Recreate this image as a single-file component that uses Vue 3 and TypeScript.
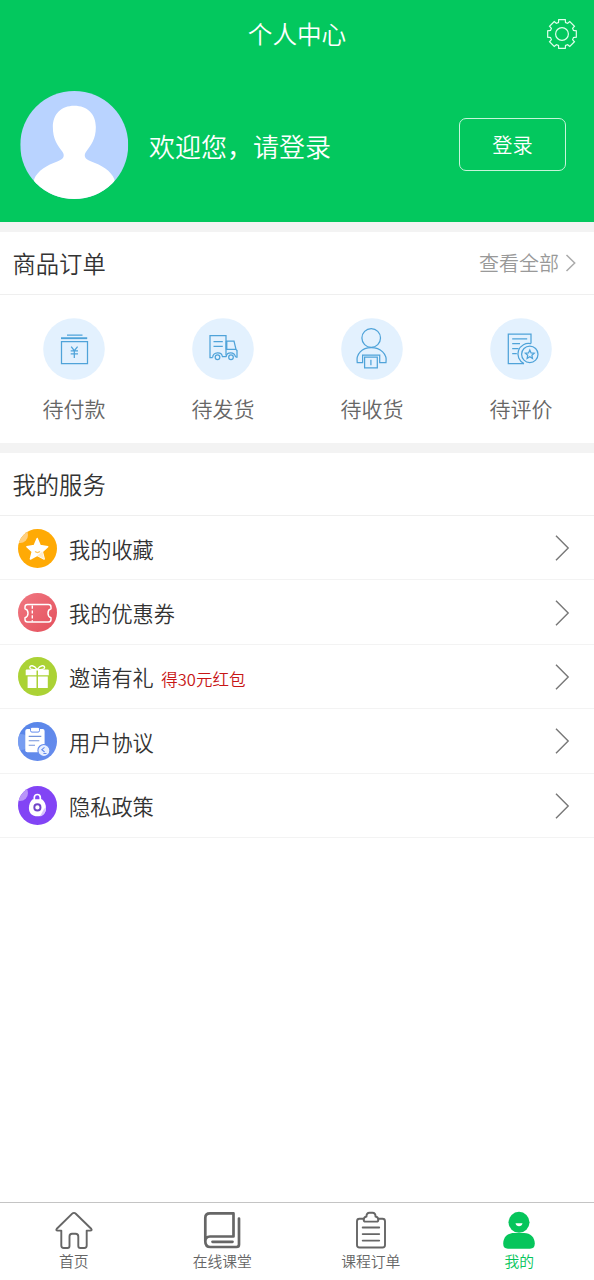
<script setup lang="ts">
interface OrderItem { id: string; label: string }
interface ServiceItem { id: string; label: string; note?: string }

const orders: OrderItem[] = [
  { id: 'pay', label: '待付款' },
  { id: 'ship', label: '待发货' },
  { id: 'receive', label: '待收货' },
  { id: 'review', label: '待评价' },
]

const services: ServiceItem[] = [
  { id: 'favorite', label: '我的收藏' },
  { id: 'coupon', label: '我的优惠券' },
  { id: 'invite', label: '邀请有礼', note: '得30元红包' },
  { id: 'terms', label: '用户协议' },
  { id: 'privacy', label: '隐私政策' },
]

const tabs: OrderItem[] = [
  { id: 'home', label: '首页' },
  { id: 'class', label: '在线课堂' },
  { id: 'orders', label: '课程订单' },
  { id: 'mine', label: '我的' },
]
const activeTab = 'mine'

// Outline of an eight-tooth gear centred on (16, 16).
function gearOutline(): string {
  const points: string[] = []
  const profile: [number, number][] = [[-17, 12], [-15, 13.2], [-13, 14.7], [13, 14.7], [15, 13.2], [17, 12]]
  for (let tooth = 0; tooth < 8; tooth++) {
    for (const [angle, radius] of profile) {
      const a = ((tooth * 45 + angle) * Math.PI) / 180
      points.push(`${(16 + radius * Math.sin(a)).toFixed(2)} ${(16 - radius * Math.cos(a)).toFixed(2)}`)
    }
  }
  return `M${points.join('L')}Z`
}
const gear = gearOutline()
</script>

<template>
  <div class="page">
    <header class="hero">
      <div class="topbar">
        <h1>个人中心</h1>
        <svg class="gear" viewBox="0 0 32 32"><path :d="gear" /><circle cx="16" cy="16" r="6.4" /></svg>
      </div>
      <div class="profile">
        <svg class="avatar" viewBox="0 0 108 108">
          <clipPath id="avatar-clip"><circle cx="54" cy="54" r="54" /></clipPath>
          <g clip-path="url(#avatar-clip)">
            <rect width="108" height="108" fill="#b9d3ff" />
            <path fill="#fff" d="M54 14.7C41 14.7 32.6 23 32.6 36C32.6 48 37 54 42 60.500C45 65 43.500 68 37 70.500C27 74 17 80 14 88L10 108H98L94 88C91 80 81 74 71 70.500C64.500 68 63 65 66 60.500C71 54 75.600 48 75.600 36C75.600 23 67 14.700 54 14.700Z" />
          </g>
        </svg>
        <span class="welcome">欢迎您，请登录</span>
        <button class="login">登录</button>
      </div>
    </header>

    <section class="block">
      <div class="head">
        <h2>商品订单</h2>
        <a class="all">查看全部<svg viewBox="0 0 12 20"><path d="M1.500 2L9.700 10L1.500 18" /></svg></a>
      </div>
      <div class="orders">
        <div v-for="item in orders" :key="item.id" class="order">
          <svg class="order-icon" viewBox="0 0 62 62">
            <circle class="disc" cx="31" cy="31" r="30.800" />
            <g v-if="item.id === 'pay'">
              <path d="M24 17H39.500M18.500 23.500H44.500V45.500H18.500Z" />
              <path stroke-width="1.900" d="M18 20.200H44.200" />
              <path d="M28.200 28.600L31.300 32.700L34.600 28.600M27.700 32.800H35M27.700 35.800H35M31.300 32.700V40" />
            </g>
            <g v-else-if="item.id === 'ship'">
              <path d="M20.600 39.500H18V17.500H34V37.500M30 38.700H34.400M34 23.200H42L44 31.400L45 32.500V39H43.600M34.600 31.400H44M21.500 23.500H30.800M21.500 28.300H30.800" />
              <path stroke-width="1.800" d="M34.500 23V31.500" />
              <path d="M20.600 39.500C21.200 33.500 29.800 33.500 30.400 38.700M34.200 38.700C34.800 33.500 42.600 33.500 43.500 39" />
              <circle cx="25.500" cy="39.200" r="2.300" /><circle cx="39" cy="39.200" r="2.300" />
            </g>
            <g v-else-if="item.id === 'receive'">
              <circle cx="30.200" cy="20" r="9.300" />
              <path d="M21.600 44.500H16.200C14.800 36 21 29.700 30.200 29.700C39.500 29.700 46.500 36 45 44.500H38.700V37H21.600ZM23.600 39.200H36.300V49.800H23.600ZM29.900 41.800V47.200" />
            </g>
            <g v-else>
              <path d="M41 25.400V16.200H18.300V45.600H34M22.200 20.900H37.200M22.200 25.700H30M22.200 30.700H28.600M22.200 35.600H26.800" />
              <path d="M41 25.700A10.600 10.600 0 0 0 34 45.600" />
              <circle cx="39.800" cy="36.300" r="8.200" />
              <path d="M39.800 32L41.100 34.900L44.200 35.200L41.900 37.300L42.500 40.400L39.800 38.800L37.100 40.400L37.700 37.300L35.400 35.200L38.500 34.900Z" />
            </g>
          </svg>
          <span>{{ item.label }}</span>
        </div>
      </div>
    </section>

    <section class="block">
      <div class="head"><h2>我的服务</h2></div>
      <div v-for="item in services" :key="item.id" class="service">
        <svg class="service-icon" viewBox="0 0 39 39">
          <defs>
            <linearGradient id="coupon-fill" x1="0" y1="0" x2="1" y2="1"><stop offset="0" stop-color="#f07882" /><stop offset="1" stop-color="#e4505c" /></linearGradient>
            <linearGradient id="terms-fill" x1="0" y1="0" x2="1" y2="1"><stop offset="0" stop-color="#5685e8" /><stop offset="1" stop-color="#688ced" /></linearGradient>
            <clipPath id="badge-clip"><circle cx="19.500" cy="19.500" r="19.500" /></clipPath>
          </defs>
          <g clip-path="url(#badge-clip)">
            <g v-if="item.id === 'favorite'">
              <rect width="39" height="39" fill="#ffaa05" />
              <circle cx="2" cy="6" r="8" fill="#ffd081" />
              <path fill="#fff" stroke="#fff" stroke-width="1.500" stroke-linejoin="round" d="M19.200 9.500L22.200 16.500L29.700 17.700L24.300 22.600L26.200 30L19.200 26.400L12.400 30L14.300 22.600L8.900 17.700L16.200 16.500Z" />
              <path fill="none" stroke="#ffc45a" stroke-width="1.200" d="M17 22.600Q19.500 24.500 22 22.600" />
              <path fill="#ffe2b0" opacity=".65" d="M19.200 26.400L24.300 22.600L26.200 30Z" />
            </g>
            <g v-else-if="item.id === 'coupon'">
              <rect width="39" height="39" fill="url(#coupon-fill)" />
              <path fill="none" stroke="#fff" stroke-width="1.450" stroke-linejoin="round" d="M9.500 11.500H30.500Q33 11.500 33 14V15.800C29 17 29 23.500 33 24.700V26.500Q33 29 30.500 29H9.500Q7 29 7 26.500V24.700C11 23.500 11 17 7 15.800V14Q7 11.500 9.500 11.500Z" />
              <path stroke="#fff" stroke-width="1.400" stroke-dasharray="3.200 1.700" d="M14.300 12.500V28.500" />
            </g>
            <g v-else-if="item.id === 'invite'">
              <rect width="39" height="39" fill="#abd235" />
              <path fill="#fff" d="M8.400 12.400H18.500V18.300H7.700V13.100ZM20 12.400H30L30.800 13.100V18.300H20ZM9.600 19.400H18.500V31H9.600ZM20 19.400H29.800V31H20Z" />
              <path fill="none" stroke="#fff" stroke-width="1.400" d="M19.200 12.600C16 8 11.700 7.700 11.800 10.700C12 12.800 16.500 12.900 19.200 12.600ZM19.200 12.600C22.400 8 26.700 7.700 26.600 10.700C26.400 12.800 22 12.900 19.200 12.600Z" />
            </g>
            <g v-else-if="item.id === 'terms'">
              <rect width="39" height="39" fill="url(#terms-fill)" />
              <circle cx="3" cy="20" r="8" fill="#83a7f3" opacity=".7" />
              <rect x="7.300" y="7" width="19.300" height="23.200" rx="2" fill="#fff" />
              <rect x="12.500" y="5.300" width="9" height="4.800" rx="1.500" fill="#fff" stroke="#648bee" stroke-width="1" />
              <path stroke="#7393db" stroke-width="1.100" d="M10.700 14.400H23.300M10.700 18.800H21.300M10.700 23.300H17" />
              <circle cx="25.900" cy="28.500" r="6" fill="#e8efff" stroke="#648bee" stroke-width="1.100" />
              <path fill="none" stroke="#648bee" stroke-width="1.100" d="M26.500 25.300L23.800 27.700L26.600 30M25.400 31.500H28.500" />
            </g>
            <g v-else>
              <rect width="39" height="39" fill="#8244f5" />
              <circle cx="2" cy="7" r="8" fill="#b995f9" />
              <path fill="none" stroke="#fff" stroke-width="1.700" d="M16.300 14V11.500A3 3 0 0 1 22.300 11.500V14" />
              <path fill="#fff" d="M14.700 13.200H24C26.500 15 28 18.500 28 22C28 27.500 24.500 30.300 19.400 30.300C14.300 30.300 10.900 27.500 10.900 22C10.900 18.500 12.300 15 14.700 13.200Z" />
              <path fill="#d7c3ff" d="M28 21C28 27.500 24.500 30.300 22 30.300L26 23Z" />
              <circle cx="19.400" cy="21.400" r="3.100" fill="#fff" stroke="#7044c9" stroke-width="1.900" />
            </g>
          </g>
        </svg>
        <span class="service-label">{{ item.label }}</span>
        <span v-if="item.note" class="note">{{ item.note }}</span>
        <svg class="chevron" viewBox="0 0 16 28"><path d="M2 1.700L14.200 14L2 26.300" /></svg>
      </div>
    </section>

    <nav class="tabs">
      <a v-for="tab in tabs" :key="tab.id" class="tab" :class="{ active: tab.id === activeTab }">
        <svg viewBox="0 0 40 40">
          <path v-if="tab.id === 'home'" stroke-width="1.900" d="M20 2.900Q19 2.900 18.200 3.700L2.800 18.700Q1.500 20.500 3.700 20.600H7.300V35.500Q7.300 38 9.800 38H13.500Q15.500 38 15.500 36V26.500Q15.500 23.700 18 23.700H21.500Q24.300 23.700 24.300 26.500V36Q24.300 38 26.300 38H30.200Q32.700 38 32.700 35.500V20.600H36.200Q38.500 20.500 37.200 18.700L21.800 3.700Q21 2.900 20 2.900Z" />
          <g v-else-if="tab.id === 'class'" stroke-width="2.700">
            <path d="M3.300 31.500V8Q3.300 3.400 8 3.400H31.500V26.500H8Q3.300 26.500 3.300 31.500Q3.300 37 8.500 37H34.500Q37 37 37 34.500V8.500" />
            <path d="M10.500 31.800H30.500" />
          </g>
          <g v-else-if="tab.id === 'orders'" stroke-width="1.900">
            <path d="M12.500 8.700H8.500Q6 8.700 6 11.200V35Q6 37.500 8.500 37.500H31.500Q34 37.500 34 35V11.200Q34 8.700 31.500 8.700H27.500" />
            <path d="M12.700 10Q12.700 7 15.500 6.500Q15.500 2.800 18.500 2.800H21.500Q24.500 2.800 24.500 6.500Q27.300 7 27.300 10Q27.300 11.600 25.500 11.600H14.500Q12.700 11.600 12.700 10Z" />
            <path d="M11.700 17.500H28.200M11.700 24.100H28.200M11.700 30.600H28.200" />
          </g>
          <g v-else stroke="none" fill="#06c55b">
            <circle cx="20" cy="12.300" r="10.500" />
            <path d="M15 22.900H25C31.500 22.900 35.800 27.500 35.800 33.500Q35.800 38.700 31 38.700H8.900Q4.200 38.700 4.200 33.500C4.200 27.500 8.500 22.900 15 22.900Z" />
            <path fill="#fff" d="M16.500 13.300H23.500C23 17.300 17 17.300 16.500 13.300Z" />
          </g>
        </svg>
        <span>{{ tab.label }}</span>
      </a>
    </nav>
  </div>
</template>

<style>
body { margin: 0; background: #fff; }
</style>

<style scoped>
.page {
  width: 594px;
  height: 1280px;
  display: flex;
  flex-direction: column;
  overflow: hidden;
  background: #fff;
  color: #333;
  font-family: "Noto Sans CJK SC", sans-serif;
  font-weight: 350;
}
h1, h2 { margin: 0; font-weight: inherit; }
svg { display: block; flex: none; }
.hero { height: 222px; flex: none; background: #03c85e; color: #fff; }
.topbar {
  height: 68px;
  display: grid;
  grid-template-columns: 1fr auto 1fr;
  align-items: center;
  padding: 0 16.500px;
  box-sizing: border-box;
}
.topbar h1 { grid-column: 2; padding-bottom: 3px; font-size: 24.6px; line-height: 36px; }
.gear { width: 32px; height: 32px; justify-self: end; fill: none; stroke: #e2ffed; stroke-width: 1.2; }
.profile { display: flex; align-items: center; padding: 23px 28px 0 20px; }
.avatar { width: 108.500px; height: 108px; }
.welcome { margin-left: 20.500px; padding-top: 2px; font-size: 26px; line-height: 38px; }
.login {
  width: 107px;
  height: 53px;
  margin: 0 0 2px auto;
  padding: 0;
  border: 1px solid #c6f5da;
  border-radius: 7px;
  background: transparent;
  color: #fff;
  font: inherit;
  font-size: 20.2px;
}
.block { flex: none; border-top: 10px solid #f3f3f3; }
.head {
  height: 63px;
  box-sizing: border-box;
  display: flex;
  align-items: center;
  justify-content: space-between;
  padding: 0 17px 0 12.500px;
  border-bottom: 1px solid #efefef;
}
.head h2 { font-size: 23.3px; line-height: 34px; }
.all { display: flex; align-items: center; font-size: 20px; line-height: 30px; color: #999; }
.all svg { width: 12px; height: 20px; margin-left: 6px; fill: none; stroke: #aaa; stroke-width: 1.5; }
.orders { height: 148px; display: grid; grid-template-columns: repeat(4, 149px); margin-left: -1px; }
.order { display: flex; flex-direction: column; align-items: center; padding-top: 22.500px; }
.order-icon { width: 62px; height: 62px; fill: none; stroke: #4fa3d9; stroke-width: 1.25; }
.disc { fill: #e3f1fe; stroke: none; }
.order span { margin: 13.500px 0 0 1px; font-size: 21px; line-height: 30px; color: #666; }
.service {
  height: 64.4px;
  box-sizing: border-box;
  display: flex;
  align-items: center;
  padding: 1px 24px 0 18px;
  border-bottom: 1px solid #f3f3f3;
}
.service-icon { width: 39px; height: 39px; }
.service-label { margin-left: 12px; padding-top: 1px; font-size: 21.200px; line-height: 30px; }
.note { margin: 4px 0 0 7.500px; font-size: 16.500px; line-height: 24px; color: #c81616; }
.chevron { width: 16px; height: 28px; margin-left: auto; fill: none; stroke: #777; stroke-width: 1.4; }
.tabs { display: flex; height: 78px; box-sizing: border-box; margin-top: auto; border-top: 1px solid #c4c4c4; }
.tab { flex: 1; display: flex; flex-direction: column; align-items: center; padding: 7px 1px 0 0; color: #666; }
.tab svg { width: 40px; height: 40px; fill: none; stroke: #666; stroke-linecap: round; stroke-linejoin: round; }
.tab span { font-size: 14.800px; line-height: 22px; }
.tab.active { color: #06c55b; }
</style>
